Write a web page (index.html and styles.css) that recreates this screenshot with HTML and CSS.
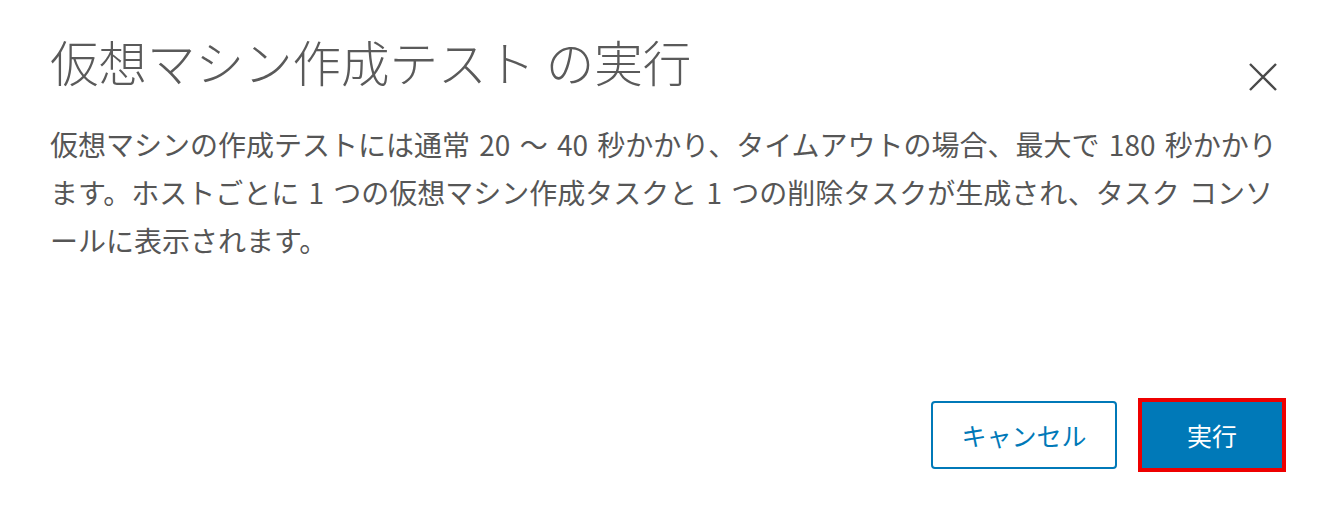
FILE: index.html
```html
<!DOCTYPE html>
<html lang="ja">
<head>
<meta charset="utf-8">
<link rel="stylesheet" href="styles.css">
</head>
<body>
<div class="modal">
  <div class="header">
    <h1 class="title">仮想マシン作成テスト の実行</h1>
    <button class="close" aria-label="閉じる">
      <svg width="30" height="30" viewBox="0 0 30 30"><path d="M2 2 L28 28 M28 2 L2 28" stroke="#4a4a4a" stroke-width="2.4" fill="none"/></svg>
    </button>
  </div>
  <p class="body">仮想マシンの作成テストには通常 20 ～ 40 秒かかり、タイムアウトの場合、最大で 180 秒かかります。ホストごとに 1 つの仮想マシン作成タスクと 1 つの削除タスクが生成され、タスク コンソールに表示されます。</p>
  <div class="footer">
    <button class="btn btn-outline">キャンセル</button>
    <div class="highlight"><button class="btn btn-primary">実行</button></div>
  </div>
</div>
</body>
</html>
```
FILE: styles.css
```css
html, body {
  margin: 0;
  padding: 0;
  background: #fff;
}
body {
  font-family: "Noto Sans CJK JP", "Noto Sans", sans-serif;
  color: #565656;
}
.modal {
  width: 1342px;
  height: 513px;
  box-sizing: border-box;
  padding: 31px 64px 0 50px;
  display: flex;
  flex-direction: column;
}
.header {
  display: flex;
  justify-content: space-between;
  align-items: flex-start;
}
.title {
  margin: 0;
  font-size: 48.5px;
  font-weight: 300;
  line-height: 60px;
  color: #5a5a5a;
  letter-spacing: 0;
}
.close {
  border: 0;
  background: none;
  padding: 0;
  margin-top: 31px;
  width: 30px;
  height: 30px;
}
.close svg { display: block; }
.body {
  margin: 28px 0 0 0;
  font-size: 28px;
  line-height: 48px;
  color: #565656;
  width: 1236px;
  word-spacing: 3px;
  line-break: loose;
}
.footer {
  margin-top: auto;
  margin-bottom: 41px;
  margin-right: -8px;
  display: flex;
  justify-content: flex-end;
  align-items: center;
  gap: 21px;
}
.btn {
  font-family: "Noto Sans CJK JP", sans-serif;
  font-size: 25px;
  border-radius: 4px;
  box-sizing: border-box;
  height: 68px;
  cursor: pointer;
}
.btn-outline {
  width: 186px;
  background: #fff;
  color: #0079b8;
  border: 2px solid #0079b8;
}
.highlight {
  border: 4px solid #ee0000;
  display: flex;
}
.btn-primary {
  width: 140px;
  height: 66px;
  background: #0079b8;
  color: #fff;
  border: 0;
  border-radius: 0;
}
```
